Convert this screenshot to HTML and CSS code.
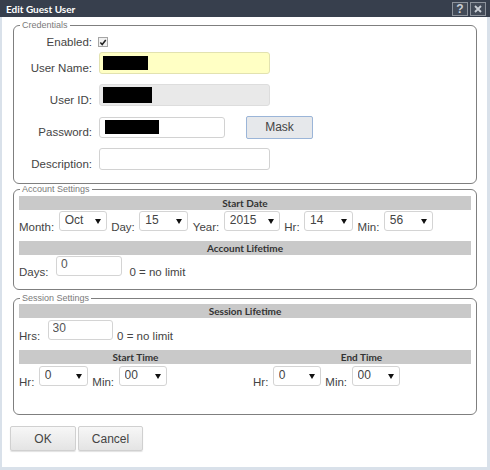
FILE: index.html
```html
<!DOCTYPE html>
<html>
<head>
<meta charset="utf-8">
<link rel="stylesheet" href="styles.css">
</head>
<body>
<div class="dialog">
  <div class="titlebar">
    <span class="title">Edit Guest User</span>
    <div class="tools">
      <span class="tool">?</span>
      <span class="tool"><svg width="8" height="8" viewBox="0 0 8 8"><path d="M1 1 L7 7 M7 1 L1 7" stroke="#c9ced5" stroke-width="1.8" fill="none"/></svg></span>
    </div>
  </div>
  <div class="body">
    <fieldset class="group cred">
      <legend>Credentials</legend>
      <div class="row row-enabled">
        <label class="lbl">Enabled:</label>
        <span class="check"><svg width="9" height="9" viewBox="0 0 9 9"><path d="M1.5 4.5 L3.6 6.8 L7.6 1.6" stroke="#222" stroke-width="1.7" fill="none"/></svg></span>
      </div>
      <div class="row">
        <label class="lbl">User Name:</label>
        <div class="input wide name"><span class="redact r-name"></span></div>
      </div>
      <div class="row">
        <label class="lbl">User ID:</label>
        <div class="input wide readonly"><span class="redact r-id"></span></div>
      </div>
      <div class="row">
        <label class="lbl">Password:</label>
        <div class="input pw"><span class="redact r-pw"></span></div>
        <button class="mask">Mask</button>
      </div>
      <div class="row">
        <label class="lbl">Description:</label>
        <div class="input wide"></div>
      </div>
    </fieldset>

    <fieldset class="group acct">
      <legend>Account Settings</legend>
      <div class="bar">Start Date</div>
      <div class="line">
        <span class="tx">Month:</span>
        <span class="sel w48"><select><option>Oct</option></select></span>
        <span class="tx">Day:</span>
        <span class="sel w49"><select><option>15</option></select></span>
        <span class="tx">Year:</span>
        <span class="sel w56"><select><option>2015</option></select></span>
        <span class="tx">Hr:</span>
        <span class="sel w49"><select><option>14</option></select></span>
        <span class="tx">Min:</span>
        <span class="sel w49"><select><option>56</option></select></span>
      </div>
      <div class="bar bar-gap">Account Lifetime</div>
      <div class="line">
        <span class="tx">Days:</span>
        <input class="num days" value="0">
        <span class="tx note">0 = no limit</span>
      </div>
    </fieldset>

    <fieldset class="group sess">
      <legend>Session Settings</legend>
      <div class="bar">Session Lifetime</div>
      <div class="line line-hrs">
        <span class="tx">Hrs:</span>
        <input class="num hrs" value="30">
        <span class="tx note-hrs">0 = no limit</span>
      </div>
      <div class="halves bar-gap">
        <div class="bar half-l">Start Time</div>
        <div class="bar half-r">End Time</div>
      </div>
      <div class="halves time-row">
        <div class="line">
          <span class="tx">Hr:</span>
          <span class="sel w49"><select><option>0</option></select></span>
          <span class="tx">Min:</span>
          <span class="sel w48"><select><option>00</option></select></span>
        </div>
        <div class="line right">
          <span class="tx">Hr:</span>
          <span class="sel w48"><select><option>0</option></select></span>
          <span class="tx">Min:</span>
          <span class="sel w48"><select><option>00</option></select></span>
        </div>
      </div>
    </fieldset>

    <div class="buttons">
      <button class="btn ok">OK</button>
      <button class="btn cancel">Cancel</button>
    </div>
  </div>
</div>
</body>
</html>
```

FILE: styles.css
```css
html, body {
  margin: 0;
  padding: 0;
  background: #fff;
}
body {
  font-family: "Liberation Sans", Arial, sans-serif;
  color: #444;
}
.dialog {
  width: 490px;
  height: 470px;
  display: flex;
  flex-direction: column;
  box-sizing: border-box;
  background: #fff;
}
.titlebar {
  height: 17px;
  flex: none;
  background: #373f4d;
  display: flex;
  align-items: center;
  justify-content: space-between;
  padding: 0 4px 0 6px;
}
.title {
  color: #fff;
  font-family: Lato, "Liberation Sans", sans-serif;
  font-weight: 700;
  font-size: 10px;
}
.tools {
  display: flex;
  gap: 2px;
  margin-top: 1px;
}
.tool {
  width: 16px;
  height: 14px;
  box-sizing: border-box;
  border: 1px solid #8d939c;
  background: #434b58;
  color: #c9ced5;
  font: bold 12px/12px "Liberation Sans", Arial, sans-serif;
  display: flex;
  align-items: center;
  justify-content: center;
}
.body {
  flex: 1;
  border-style: solid;
  border-color: #d9e1ea;
  border-width: 0 3px 3px 2px;
  padding: 3px 10px 0 8px;
}
.group {
  margin: 0 0 0 3px;
  padding: 0 5px;
  border: 1px solid #7f7f7f;
  border-radius: 6px;
}
.group legend {
  font-size: 9px;
  line-height: 11px;
  color: #7a7a7a;
  padding: 0 2px;
  margin-left: 1px;
}
.cred {
  padding-top: 3px;
  padding-bottom: 13px;
}
.row {
  display: flex;
  align-items: center;
  height: 22px;
  margin-bottom: 10px;
  font-size: 11.5px;
  color: #444;
}
.row:last-child {
  margin-bottom: 0;
}
.row-enabled {
  height: 16px;
  margin-bottom: 2px;
}
.lbl {
  width: 73px;
  text-align: right;
  margin-right: 4px;
  flex: none;
  align-self: flex-end;
  line-height: 13px;
  margin-bottom: -1px;
}
.row-enabled .lbl {
  align-self: center;
  margin-bottom: 0;
}
.row .input {
  margin-left: 3px;
}
.check {
  width: 10px;
  height: 10px;
  box-sizing: border-box;
  border: 1px solid #a5a5a5;
  background: #f1f1f1;
  display: flex;
  align-items: center;
  justify-content: center;
  margin-left: 2px;
}
.input {
  height: 22px;
  box-sizing: border-box;
  border: 1px solid #d2d2d2;
  border-radius: 3px;
  background: #fff;
  display: flex;
  align-items: center;
  padding-left: 3px;
}
.wide {
  width: 171px;
}
.pw {
  width: 126px;
  height: 21px;
  padding-left: 5px;
}
.name {
  background: #ffffc4;
  border-color: #e2e2b0;
}
.readonly {
  background: #e9e9e9;
  border-color: #dddddd;
}
.redact {
  display: block;
  background: #000;
}
.r-name { width: 45px; height: 14px; }
.r-id { width: 49px; height: 16px; }
.r-pw { width: 54px; height: 14px; }
.mask {
  margin-left: 21px;
  width: 67px;
  height: 23px;
  border: 1px solid #9bb5d8;
  border-radius: 2px;
  background: #e6e8eb;
  font-family: "Liberation Sans", Arial, sans-serif;
  font-size: 12px;
  color: #444;
  padding: 0;
}
.acct {
  margin-top: 0;
  padding-top: 1px;
  padding-bottom: 12px;
}
.sess {
  margin-top: 3px;
  padding-top: 0;
  padding-bottom: 27px;
}
.bar {
  height: 14px;
  background: #c9c9c9;
  font-family: Lato, "Liberation Sans", sans-serif;
  font-weight: 700;
  font-size: 10px;
  line-height: 14px;
  text-align: center;
  color: #333;
}
.bar-gap {
  margin-top: 9px;
}
.line {
  display: flex;
  align-items: flex-end;
  gap: 4.5px;
  height: 21px;
  margin-top: 1px;
  font-size: 11.5px;
  color: #444;
  white-space: nowrap;
}
.tx {
  line-height: 13px;
  margin-bottom: -2px;
}
.sel {
  position: relative;
  display: inline-block;
  height: 20px;
  margin-bottom: 1px;
}
.sel select {
  appearance: none;
  -webkit-appearance: none;
  width: 100%;
  height: 20px;
  box-sizing: border-box;
  border: 1px solid #d4d4d4;
  border-radius: 3px;
  background: #fff;
  font-family: "Liberation Sans", Arial, sans-serif;
  font-size: 12px;
  color: #444;
  padding: 0 0 3px 5px;
  margin: 0;
}
.sel::after {
  content: "";
  position: absolute;
  right: 6px;
  top: 8px;
  border-left: 3px solid transparent;
  border-right: 3px solid transparent;
  border-top: 5px solid #111;
  pointer-events: none;
}
.w48 { width: 48px; }
.w49 { width: 49px; }
.w56 { width: 56px; }
.num {
  height: 20px;
  box-sizing: border-box;
  border: 1px solid #d4d4d4;
  border-radius: 3px;
  font-family: "Liberation Sans", Arial, sans-serif;
  font-size: 12px;
  color: #555;
  padding: 0 0 4px 4px;
  margin: 0 0 1px 0;
}
.days {
  width: 66px;
  margin-left: 3px;
}
.note {
  margin-left: 3px;
}
.line-hrs {
  margin-top: 2px;
}
.hrs {
  width: 65px;
  margin-left: 3px;
}
.note-hrs {
  margin-left: 0;
}
.halves {
  display: grid;
  grid-template-columns: 1fr 1fr;
}
.half-l, .half-r {
  padding-left: 7px;
}
.time-row .line {
  margin-top: 2px;
}
.line.right {
  padding-left: 8px;
}
.buttons {
  display: flex;
  gap: 2px;
  margin-top: 11px;
}
.btn {
  height: 25px;
  border: 1px solid #d0d0d0;
  border-radius: 2px;
  background: linear-gradient(#f7f7f7, #e4e4e4);
  box-shadow: 0 1px 1px rgba(0,0,0,0.12);
  font-family: "Liberation Sans", Arial, sans-serif;
  font-size: 12px;
  color: #444;
  padding: 0;
}
.ok { width: 66px; }
.cancel { width: 65px; }
```
